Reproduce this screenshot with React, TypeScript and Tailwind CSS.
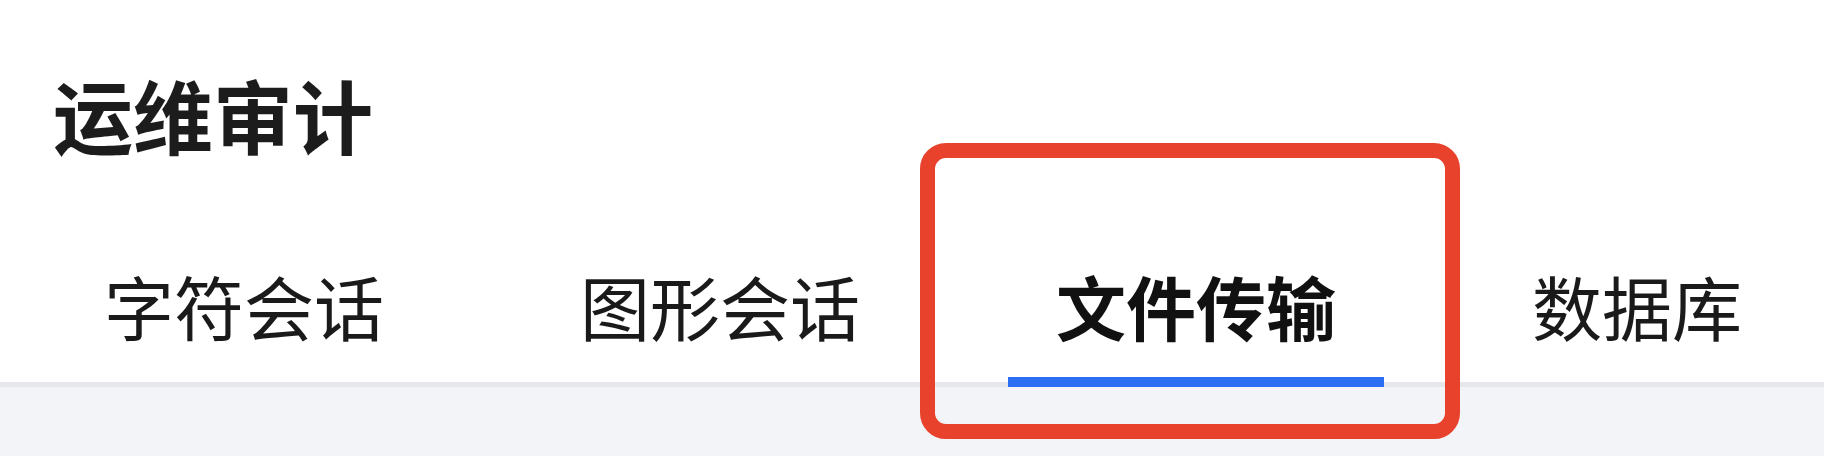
import React from "react";

const tabs = ["字符会话", "图形会话", "文件传输", "数据库"];

export default function App() {
  const active = 2;
  return (
    <div
      className="relative w-[1824px] h-[456px] bg-[#f3f4f8] overflow-hidden"
      style={{ fontFamily: '"Noto Sans CJK SC", "Noto Sans", sans-serif' }}
    >
      <div className="bg-white">
        <div className="pl-[53px] pt-[59px] h-[262px]">
          <h1 className="text-[80px] leading-[108px] font-bold text-[#1c1c1c]">运维审计</h1>
        </div>
        <div className="flex gap-[100px] pl-[56px] border-b-[5px] border-[#e6e7eb]">
          {tabs.map((t, i) => (
            <div key={t} className="relative px-[48px] pb-[32px]">
              <span
                className={
                  "block text-[70px] leading-[88px] whitespace-nowrap " +
                  (i === active ? "font-bold text-[#111111]" : "font-normal text-[#1a1a1a]")
                }
              >
                {t}
              </span>
              {i === active && (
                <div className="absolute left-0 right-0 bottom-[-5px] h-[10px] bg-[#2b6ef4]" />
              )}
            </div>
          ))}
        </div>
      </div>
      <div className="absolute left-[920px] top-[143px] w-[540px] h-[296px] border-[15px] border-[#e8412c] rounded-[26px]" />
    </div>
  );
}
